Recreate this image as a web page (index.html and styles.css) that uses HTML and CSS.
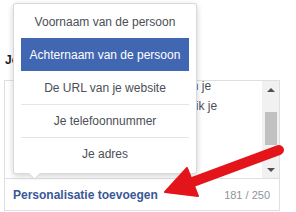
FILE: index.html
```html
<!DOCTYPE html>
<html lang="nl">
<head>
<meta charset="utf-8">
<link rel="stylesheet" href="styles.css">
</head>
<body>
<div class="page">
  <div class="label">Je bericht</div>
  <div class="field">
    <div class="editor">
      <div class="text">
        <div class="line">Bedankt voor je bericht. Wij helpen je</div>
        <div class="line">snel verder. Binnen een dag stuur ik je</div>
        <div class="line">een antwoord.</div>
        <div class="line">Groeten,</div>
      </div>
      <div class="scrollbar">
        <div class="btn"><span class="tri up"></span></div>
        <div class="track"><div class="thumb"></div></div>
        <div class="btn"><span class="tri down"></span></div>
      </div>
    </div>
    <div class="footer">
      <span class="add">Personalisatie toevoegen</span>
      <span class="count">181 / 250</span>
    </div>
  </div>
  <div class="menu">
    <div class="item">Voornaam van de persoon</div>
    <div class="item active">Achternaam van de persoon</div>
    <div class="item">De URL van je website</div>
    <div class="item sep">Je telefoonnummer</div>
    <div class="item sep">Je adres</div>
  </div>
  <svg class="arrow" width="296" height="212" viewBox="0 0 296 212">
    <line x1="279" y1="150" x2="190" y2="183" stroke="#e3151b" stroke-width="10" stroke-linecap="round"/>
    <polygon points="165,192 187,168 198,196" fill="#e3151b" stroke="#e3151b" stroke-width="2" stroke-linejoin="round"/>
  </svg>
</div>
</body>
</html>
```
FILE: styles.css
```css
html, body {
  margin: 0;
  padding: 0;
  background: #ffffff;
}
body {
  font-family: "Liberation Sans", Arial, sans-serif;
  width: 296px;
  height: 212px;
  overflow: hidden;
}
.page {
  position: relative;
  width: 296px;
  height: 212px;
}
.label {
  padding: 52px 0 0 5px;
  height: 16px;
  line-height: 16px;
  font-size: 12px;
  font-weight: bold;
  color: #1d2129;
  margin-bottom: 12px;
}
.field {
  margin-left: 4px;
  width: 276px;
  box-sizing: border-box;
  border: 1px solid #dddfe2;
}
.editor {
  display: flex;
  height: 97px;
}
.text {
  flex: 1;
  overflow: hidden;
  padding: 0 8px;
  font-size: 12px;
  line-height: 20px;
  color: #4b4f56;
}
.line {
  white-space: nowrap;
}
.line:first-child {
  margin-top: -5px;
}
.scrollbar {
  width: 17px;
  background: #f1f1f1;
  display: flex;
  flex-direction: column;
}
.btn {
  height: 17px;
  display: flex;
  align-items: center;
  justify-content: center;
}
.tri {
  width: 0;
  height: 0;
  border-left: 4px solid transparent;
  border-right: 4px solid transparent;
}
.tri.up {
  border-bottom: 4px solid #505050;
}
.tri.down {
  border-top: 4px solid #505050;
}
.track {
  flex: 1;
}
.thumb {
  margin: 14px 2px 0 3px;
  height: 33px;
  background: #c1c1c1;
}
.footer {
  border-top: 1px solid #dddfe2;
  height: 31px;
  display: flex;
  align-items: center;
  justify-content: space-between;
  padding: 0 9px 0 8px;
}
.add {
  font-size: 12px;
  font-weight: bold;
  color: #385898;
}
.count {
  font-size: 11px;
  color: #90949c;
}
.menu {
  position: absolute;
  left: 13px;
  top: 3px;
  width: 184px;
  box-sizing: border-box;
  background: #ffffff;
  border: 1px solid rgba(0, 0, 0, 0.15);
  border-radius: 3px;
  box-shadow: 0 2px 6px rgba(0, 0, 0, 0.18);
  padding: 1px 7px 3px;
}
.menu::after {
  content: "";
  position: absolute;
  left: 16px;
  bottom: -5px;
  width: 8px;
  height: 8px;
  background: #ffffff;
  border-right: 1px solid rgba(0, 0, 0, 0.15);
  border-bottom: 1px solid rgba(0, 0, 0, 0.15);
  transform: rotate(45deg);
}
.item {
  height: 33px;
  box-sizing: border-box;
  display: flex;
  align-items: center;
  justify-content: center;
  font-size: 12px;
  color: #4b4f56;
}
.item.sep {
  border-top: 1px solid #e5e5e5;
}
.item.active {
  background: #4267b2;
  color: #ffffff;
}
.arrow {
  position: absolute;
  left: 0;
  top: 0;
  pointer-events: none;
}
```
